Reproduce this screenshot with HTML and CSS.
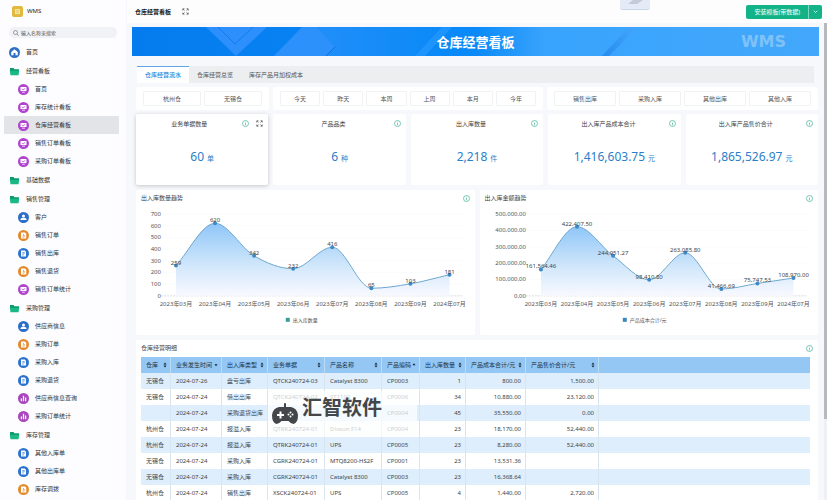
FILE: index.html
```html
<!DOCTYPE html>
<html lang="zh-CN">
<head>
<meta charset="utf-8">
<title>仓库经营看板</title>
<link rel="stylesheet" href="styles.css">
</head>
<body>
<svg class="defs" aria-hidden="true">
  <symbol id="i-home" viewBox="0 0 22 22"><circle cx="11" cy="11" r="11" fill="#2f6fc4"/><path d="M11 4.5 4.5 10v6.5H9V12h4v4.500h4.500V10z" fill="#fff"/></symbol>
  <symbol id="i-folder" viewBox="0 0 22 22"><path d="M2 4h7l2 2.500h9V10H2z" fill="#0c9a6c"/><path d="M1.500 9.500h19L19 18.500H3z" fill="#1bb886"/></symbol>
  <symbol id="i-board" viewBox="0 0 22 22"><circle cx="11" cy="11" r="11" fill="#b043cf"/><path d="M5 6h12v8H5zM8 15.500h6V17H8z" fill="#fff"/><path d="m7.500 10 2.500 2 4.500-3.500" fill="none" stroke="#b043cf" stroke-width="1.500"/></symbol>
  <symbol id="i-user" viewBox="0 0 22 22"><circle cx="11" cy="11" r="11" fill="#2c6fc9"/><circle cx="11" cy="8" r="3" fill="#fff"/><path d="M5 16v-2q1-2 4.500-2.500h3q3.500.5 4.500 2.500v2z" fill="#fff"/></symbol>
  <symbol id="i-order" viewBox="0 0 22 22"><circle cx="11" cy="11" r="11" fill="#e38a2c"/><path d="M6 5h8l2.500 2.500V17H6z" fill="#fff"/><path d="M11 8v3.500h3M9 14h4" fill="none" stroke="#e38a2c" stroke-width="1.500"/></symbol>
  <symbol id="i-doc" viewBox="0 0 22 22"><circle cx="11" cy="11" r="11" fill="#2c73cf"/><path d="M6 5h7.500L16 7.500V17H6z" fill="#fff"/><path d="M8.500 9h5M8.500 11.500h5M8.500 14h3" stroke="#2c73cf" stroke-width="1.200"/></symbol>
  <symbol id="i-bars" viewBox="0 0 22 22"><circle cx="11" cy="11" r="11" fill="#a945bd"/><path d="M5.500 11H8v5.500H5.500zM9.700 5.500h2.600v11H9.700zM14 9h2.500v7.500H14z" fill="#fff"/></symbol>
  <symbol id="i-info" viewBox="0 0 14 14"><circle cx="7" cy="7" r="6" fill="none" stroke="currentColor" stroke-width="1.300"/><path d="M7 6v4.500M7 3.500v1.300" stroke="currentColor" stroke-width="1.300"/></symbol>
  <symbol id="i-expand" viewBox="0 0 14 14"><path d="M1.500 5V1.500H5M9 1.500h3.500V5M12.500 9v3.500H9M5 12.500H1.500V9M2 2l3 3M12 2 9 5M12 12 9 9M2 12l3-3" fill="none" stroke="currentColor" stroke-width="1.300"/></symbol>
  <symbol id="i-sort" viewBox="0 0 8 12"><path d="M4 1 7 5H1zM4 11 1 7h6z" fill="currentColor"/></symbol>
  <symbol id="i-desc" viewBox="0 0 8 12"><path d="M4 8.500 1 4.500h6z" fill="currentColor"/></symbol>
  <symbol id="i-asc" viewBox="0 0 8 12"><path d="M4 2.500 7 6.500H1z" fill="currentColor"/></symbol>
</svg>

<aside class="sidebar">
  <div class="brand">
    <svg class="brand-logo" viewBox="0 0 22 22"><rect width="22" height="22" rx="4" fill="#e2b93f"/><path d="M6 6h10v10H6z" fill="#f6e3a4"/><path d="M8.500 9h5M8.500 12.500h5" stroke="#e2b93f" stroke-width="1.500"/></svg>
    <span>WMS</span>
  </div>
  <label class="search">
    <svg viewBox="0 0 12 12"><circle cx="5" cy="5" r="4" fill="none" stroke="#666" stroke-width="1.200"/><path d="m8 8 3.500 3.500" stroke="#666" stroke-width="1.200"/></svg>
    <input type="text" placeholder="输入名称来搜索" aria-label="搜索">
  </label>
  <nav class="menu">
    <a href="#"><svg><use href="#i-home"/></svg>首页</a>
    <a href="#" class="group"><svg><use href="#i-folder"/></svg>经营看板</a>
    <a href="#" class="sub"><svg><use href="#i-board"/></svg>首页</a>
    <a href="#" class="sub"><svg><use href="#i-board"/></svg>库存统计看板</a>
    <a href="#" class="sub active"><svg><use href="#i-board"/></svg>仓库经营看板</a>
    <a href="#" class="sub"><svg><use href="#i-board"/></svg>销售订单看板</a>
    <a href="#" class="sub"><svg><use href="#i-board"/></svg>采购订单看板</a>
    <a href="#" class="group"><svg><use href="#i-folder"/></svg>基础数据</a>
    <a href="#" class="group"><svg><use href="#i-folder"/></svg>销售管理</a>
    <a href="#" class="sub"><svg><use href="#i-user"/></svg>客户</a>
    <a href="#" class="sub"><svg><use href="#i-order"/></svg>销售订单</a>
    <a href="#" class="sub"><svg><use href="#i-doc"/></svg>销售出库</a>
    <a href="#" class="sub"><svg><use href="#i-order"/></svg>销售退货</a>
    <a href="#" class="sub"><svg><use href="#i-board"/></svg>销售订单统计</a>
    <a href="#" class="group"><svg><use href="#i-folder"/></svg>采购管理</a>
    <a href="#" class="sub"><svg><use href="#i-user"/></svg>供应商信息</a>
    <a href="#" class="sub"><svg><use href="#i-order"/></svg>采购订单</a>
    <a href="#" class="sub"><svg><use href="#i-doc"/></svg>采购入库</a>
    <a href="#" class="sub"><svg><use href="#i-doc"/></svg>采购退货</a>
    <a href="#" class="sub"><svg><use href="#i-bars"/></svg>供应商信息查询</a>
    <a href="#" class="sub"><svg><use href="#i-bars"/></svg>采购订单统计</a>
    <a href="#" class="group"><svg><use href="#i-folder"/></svg>库存管理</a>
    <a href="#" class="sub"><svg><use href="#i-doc"/></svg>其他入库单</a>
    <a href="#" class="sub"><svg><use href="#i-doc"/></svg>其他出库单</a>
    <a href="#" class="sub"><svg><use href="#i-order"/></svg>库存调拨</a>
  </nav>
</aside>

<main class="main">
  <header class="topbar">
    <h1>仓库经营看板</h1>
    <svg class="icon dark"><use href="#i-expand"/></svg>
    <div class="pull-tab"><svg viewBox="0 0 30 10"><path d="M13 0h10l-6 4H8z" fill="#c3cad8"/></svg></div>
    <div class="install">
      <button type="button">安装模板(带数据)</button>
      <button type="button" class="more" aria-label="更多"><svg viewBox="0 0 10 10"><path d="m1.500 3.500 3.500 3.500 3.500-3.500" fill="none" stroke="#fff" stroke-width="1.500"/></svg></button>
    </div>
  </header>

  <div class="viewport">
    <div class="content">
      <section class="banner">
        <svg class="banner-art" viewBox="0 0 687 29" preserveAspectRatio="none">
          <defs>
            <linearGradient id="band"><stop offset="0" stop-color="#2b93fa"/><stop offset="1" stop-color="#0b8af8"/></linearGradient>
            <linearGradient id="streak" x1="0" y1="1" x2="1" y2="0"><stop offset="0" stop-color="#1c80e8"/><stop offset="1" stop-color="#48a8fb"/></linearGradient>
          </defs>
          <path d="M74 0h61l-31 29z" fill="#2c8ffb"/>
          <path d="m86 0 17 17L121 0" fill="none" stroke="#1479ec"/>
          <path d="M142 29 170 0h15l18 20-9 9z" fill="#2c91fb"/>
          <path d="M185 0h125l-27 29h-89l9-9z" fill="url(#band)" opacity=".7"/>
          <path d="m194 29 9-9" stroke="#0c70dd"/>
          <path d="m283 29 27-29h10l-27 29z" fill="#2b9cff" opacity=".6"/>
          <path d="m470 29 27-29h8l-28 29z" fill="url(#streak)" opacity=".7"/>
        </svg>
        <h2>仓库经营看板</h2>
        <span class="banner-mark">WMS</span>
      </section>

      <div class="tabs" role="tablist">
        <button type="button" role="tab" aria-selected="true">仓库经营流水</button>
        <button type="button" role="tab" aria-selected="false">仓库经营总览</button>
        <button type="button" role="tab" aria-selected="false">库存产品月加权成本</button>
      </div>

      <div class="filters">
        <div class="card filter"><button type="button">杭州仓</button><button type="button">无锡仓</button></div>
        <div class="card filter"><button type="button">今天</button><button type="button">昨天</button><button type="button">本周</button><button type="button">上周</button><button type="button">本月</button><button type="button">今年</button></div>
        <div class="card filter"><button type="button">销售出库</button><button type="button">采购入库</button><button type="button">其他出库</button><button type="button">其他入库</button></div>
      </div>

      <div class="kpis">
        <section class="card kpi raised"><header><h3>业务单据数量</h3><svg class="icon"><use href="#i-info"/></svg><svg class="icon dark"><use href="#i-expand"/></svg></header><p>60<small>单</small></p></section>
        <section class="card kpi"><header><h3>产品品类</h3><svg class="icon"><use href="#i-info"/></svg></header><p>6<small>种</small></p></section>
        <section class="card kpi"><header><h3>出入库数量</h3><svg class="icon"><use href="#i-info"/></svg></header><p>2,218<small>件</small></p></section>
        <section class="card kpi"><header><h3>出入库产品成本合计</h3><svg class="icon"><use href="#i-info"/></svg></header><p>1,416,603.75<small>元</small></p></section>
        <section class="card kpi"><header><h3>出入库产品售价合计</h3><svg class="icon"><use href="#i-info"/></svg></header><p>1,865,526.97<small>元</small></p></section>
      </div>

      <div class="charts">
        <section class="card panel"><header><h3>出入库数量趋势</h3><svg class="icon"><use href="#i-info"/></svg></header><svg class="chart" id="chart-qty" viewBox="0 0 339 129"></svg></section>
        <section class="card panel"><header><h3>出入库金额趋势</h3><svg class="icon"><use href="#i-info"/></svg></header><svg class="chart" id="chart-amount" viewBox="0 0 339 129"></svg></section>
      </div>

      <section class="card panel detail">
        <header><h3>仓库经营明细</h3><svg class="icon"><use href="#i-info"/></svg></header>
        <table>
          <colgroup><col class="c-store"><col class="c-date"><col class="c-type"><col class="c-bill"><col class="c-bill"><col class="c-code"><col class="c-qty"><col class="c-cost"><col class="c-price"><col></colgroup>
          <thead><tr>
            <th><div>仓库<svg><use href="#i-sort"/></svg></div></th>
            <th><div>业务发生时间<svg><use href="#i-desc"/></svg></div></th>
            <th><div>出入库类型<svg><use href="#i-sort"/></svg></div></th>
            <th><div>业务单据<svg><use href="#i-sort"/></svg></div></th>
            <th><div>产品名称<svg><use href="#i-sort"/></svg></div></th>
            <th><div>产品编码<svg><use href="#i-asc"/></svg></div></th>
            <th><div>出入库数量<svg><use href="#i-sort"/></svg></div></th>
            <th><div>产品成本合计/元<svg><use href="#i-sort"/></svg></div></th>
            <th><div>产品售价合计/元<svg><use href="#i-sort"/></svg></div></th>
            <th></th>
          </tr></thead>
          <tbody>
            <tr><td>无锡仓</td><td>2024-07-26</td><td>盘亏出库</td><td>QTCK240724-03</td><td>Catalyst 8300</td><td>CP0003</td><td class="num">1</td><td class="num">800.00</td><td class="num">1,500.00</td><td></td></tr>
            <tr><td>无锡仓</td><td>2024-07-24</td><td>借出出库</td><td>QTCK240724-02</td><td>ST1100</td><td>CP0006</td><td class="num">34</td><td class="num">10,880.00</td><td class="num">23,120.00</td><td></td></tr>
            <tr><td></td><td>2024-07-24</td><td>采购退货出库</td><td></td><td></td><td>CP0004</td><td class="num">45</td><td class="num">35,550.00</td><td class="num">0.00</td><td></td></tr>
            <tr><td>杭州仓</td><td>2024-07-24</td><td>报溢入库</td><td>QTRK240724-01</td><td>Dixsun F14</td><td>CP0004</td><td class="num">23</td><td class="num">18,170.00</td><td class="num">52,440.00</td><td></td></tr>
            <tr><td>杭州仓</td><td>2024-07-24</td><td>报溢入库</td><td>QTRK240724-01</td><td>UPS</td><td>CP0005</td><td class="num">23</td><td class="num">8,280.00</td><td class="num">52,440.00</td><td></td></tr>
            <tr><td>无锡仓</td><td>2024-07-24</td><td>采购入库</td><td>CGRK240724-01</td><td>MTQ8200-HS2F</td><td>CP0001</td><td class="num">23</td><td class="num">13,531.36</td><td class="num"></td><td></td></tr>
            <tr><td>无锡仓</td><td>2024-07-24</td><td>采购入库</td><td>CGRK240724-01</td><td>Catalyst 8300</td><td>CP0003</td><td class="num">23</td><td class="num">16,368.64</td><td class="num"></td><td></td></tr>
            <tr><td>杭州仓</td><td>2024-07-24</td><td>销售出库</td><td>XSCK240724-01</td><td>UPS</td><td>CP0005</td><td class="num">4</td><td class="num">1,440.00</td><td class="num">2,720.00</td><td></td></tr>
          </tbody>
        </table>
        <div class="watermark">
          <svg viewBox="0 0 26 22"><path d="M12 4V1a1 1 0 0 1 2 0v3h5q6 1 7 8 0 8-4.500 9-2.500 0-5-3h-7q-2.500 3-5 3Q0 20 0 12 1 5 7 4z" fill="#43474c"/><path d="M8.500 8.500v7M5 12h7" stroke="#fff" stroke-width="2"/><circle cx="18.500" cy="9.500" r="1" fill="#fff"/><circle cx="18.500" cy="13.500" r="1" fill="#fff"/><circle cx="16.500" cy="11.500" r="1" fill="#fff"/><circle cx="20.500" cy="11.500" r="1" fill="#fff"/></svg>
          <strong>汇智软件</strong>
        </div>
      </section>
    </div>
    <div class="scrollbar"><span></span></div>
  </div>
</main>
<script src="charts.js"></script>
</body>
</html>
```
FILE: styles.css
```css
* { box-sizing: border-box; }

body {
  margin: 0;
  height: 100vh;
  display: flex;
  overflow: hidden;
  background: #fcfdfe;
  color: #444;
  font: 6px/10px "Noto Sans", "Noto Sans CJK SC", sans-serif;
}

h1, h2, h3, p { margin: 0; font-size: inherit; font-weight: 400; }
button { font: inherit; color: inherit; border: 0; padding: 0; background: none; }
.defs { position: absolute; width: 0; height: 0; }

.icon { width: 7px; height: 7px; flex: none; color: #35ac92; }
.icon.dark { color: #444; }

/* Sidebar */
.sidebar { width: 127px; flex: none; overflow: hidden; background: #fdfdff; border-right: 1px solid #f6f7fa; }
.brand { display: flex; align-items: center; gap: 4px; height: 22px; padding-left: 12px; color: #222; }
.brand-logo { width: 11px; height: 11px; }
.search { display: flex; align-items: center; gap: 2px; height: 11px; margin: 5px 9px; padding-left: 4px; border-radius: 5px; background: #f1f2f5; }
.search svg { width: 6px; height: 6px; }
.search input { flex: 1; min-width: 0; padding: 0; border: 0; background: none; font: inherit; font-size: 5px; }
.search input::placeholder { color: #555; }
.menu { display: flex; flex-direction: column; margin: 0 7px 0 4px; }
.menu a { display: flex; align-items: center; gap: 6px; height: 18px; padding-left: 5px; border-radius: 1px; color: #333; text-decoration: none; }
.menu a.group { margin-top: 1px; }
.menu a.sub { padding-left: 14px; }
.menu a.active { background: #e3e4e8; }
.menu svg { width: 11px; height: 11px; }

/* Top bar */
.main { flex: 1; min-width: 0; display: flex; flex-direction: column; }
.topbar { position: relative; display: flex; align-items: center; gap: 11px; flex: none; height: 23px; padding: 0 5px 0 8px; background: #fdfdfe; }
.topbar h1 { font-weight: 700; color: #222; }
.pull-tab { position: absolute; top: 0; right: 177px; width: 30px; height: 10px; border-radius: 0 0 3px 3px; background: #e4ebf6; border-bottom: 1px solid #c9d6ea; }
.pull-tab svg { display: block; width: 30px; height: 10px; }
.install { display: flex; height: 14px; margin-left: auto; border-radius: 2px; overflow: hidden; background: #13b388; color: #fff; }
.install button { padding: 0 8px; }
.install .more { display: flex; align-items: center; padding: 0 4px; border-left: 1px solid #7ed6be; }
.install .more svg { width: 5px; height: 5px; }

/* Scroll area */
.viewport { flex: 1; min-height: 0; display: flex; background: #f7f8fb; }
.content { flex: 1; min-width: 0; padding: 4px 6px 0 9px; overflow: hidden; }
.scrollbar { width: 3px; flex: none; background: #eef0f3; }
.scrollbar span { display: block; height: 83%; background: #b7b9bc; }

.banner { position: relative; display: flex; align-items: center; justify-content: center; height: 29px; margin: 0 -1px 10px -4px; background: linear-gradient(90deg, #057bee, #0a8af8 50%, #38a3fd 60%, #43a8fb); color: #fff; }
.banner-art { position: absolute; inset: 0; width: 100%; height: 100%; }
.banner h2 { position: relative; font-size: 13px; font-weight: 700; }
.banner-mark { position: absolute; right: 33px; color: #7fc2fa; font: 700 16px/29px "DejaVu Sans", sans-serif; }

.tabs { display: flex; height: 17px; margin: 0 4px 4px 1px; background: #eceef0; color: #555; }
.tabs button { padding: 0 8px; }
.tabs [aria-selected="true"] { background: #fff; color: #1684dc; border-top: 1px solid #5ea6e6; font-weight: 500; }

.card { background: #fff; border-radius: 2px; }

.filters { display: grid; grid-template-columns: 133fr 270fr 271fr; gap: 4px; margin-bottom: 4px; }
.filter { display: flex; gap: 3px; padding: 4px 7px; }
.filter button { flex: 1; height: 15px; border: 1px solid #f0f2f4; border-radius: 1px; color: #555; }

.kpis { display: grid; grid-template-columns: repeat(5, 1fr); gap: 5px; margin-bottom: 5px; }
.kpi { height: 71px; }
.kpi.raised { box-shadow: 0 1px 4px #0003; }
.kpi header { display: flex; align-items: center; gap: 7px; height: 19px; padding-right: 5px; }
.kpi h3 { flex: 1; text-align: center; margin-right: -7px; }
.kpi p { padding-top: 16px; text-align: center; color: #2b80c8; font-size: 12px; line-height: 16px; }
.kpi small { margin-left: 3px; font-size: 7px; }

.charts { display: grid; grid-template-columns: 1fr 1fr; gap: 5px; margin-bottom: 5px; }
.panel header { display: flex; align-items: center; justify-content: space-between; height: 16px; padding: 0 5px; }
.chart { display: block; width: 100%; }
.chart text { font-size: 6px; fill: #555; }
.chart .value { fill: #444; text-anchor: middle; }
.chart .month { text-anchor: middle; }
.chart .tick { text-anchor: end; }
.chart .legend { font-size: 5px; }
.chart .grid { stroke: #fafbfc; }
.chart .axis { stroke: #d8dbe0; stroke-dasharray: 2 1; }
.chart .line { fill: none; stroke: #6da7cc; }
.chart .dot { fill: #3d8ac6; }

/* Detail table */
.detail { position: relative; padding: 0 8px 0 5px; }
.detail header { height: 17px; padding: 0; }
.detail header .icon { margin-right: -3px; }
table { width: 100%; table-layout: fixed; border-collapse: separate; border-spacing: 0; }
.c-store { width: 30px; }
.c-date { width: 51px; }
.c-type { width: 46px; }
.c-bill { width: 57px; }
.c-code { width: 38px; }
.c-qty { width: 46px; }
.c-cost { width: 60px; }
.c-price { width: 73px; }
th, td { height: 16px; padding: 0 4px 0 5px; border-right: 1px solid #d9e5ee; text-align: left; font-weight: 400; white-space: nowrap; }
th { background: #94c7f3; border-color: #b9dbf6; color: #234; }
th div { display: flex; align-items: center; justify-content: space-between; }
th svg { width: 4px; height: 6px; flex: none; margin-right: -1px; color: #123; }
tbody tr:nth-child(odd) td { background: #deeefc; }
th:last-child, td:last-child { border-right: 0; }
.num { text-align: right; }

.watermark { position: absolute; top: 51px; left: 132px; display: flex; gap: 4px; width: 149px; height: 46px; padding: 6px 4px; background: #fcfefebb; color: #43474c; }
.watermark svg { width: 26px; height: 22px; margin-top: 6px; }
.watermark strong { font-size: 20px; line-height: 22px; }
```
FILE: charts.js
```js
const months = ["2023年03月", "2023年04月", "2023年05月", "2023年06月", "2023年07月", "2023年08月", "2023年09月", "2024年07月"];
const TOP = 8, BASE = 90;

// Cubic path through the points that never overshoots a local extreme.
function smoothPath(pts) {
  const n = pts.length;
  const slope = pts.slice(1).map((p, i) => (p[1] - pts[i][1]) / (p[0] - pts[i][0]));
  const tangent = pts.map((_, i) => {
    if (i === 0) return slope[0];
    if (i === n - 1) return slope[n - 2];
    const a = slope[i - 1], b = slope[i];
    if (a * b <= 0) return 0;
    return Math.sign(a) * Math.min(Math.abs(a), Math.abs(b), Math.abs(a + b) / 4) * 2;
  });
  let d = `M${pts[0]}`;
  for (let i = 1; i < n; i++) {
    const [x0, y0] = pts[i - 1], [x1, y1] = pts[i], h = (x1 - x0) / 3;
    d += `C${x0 + h},${y0 + tangent[i - 1] * h} ${x1 - h},${y1 - tangent[i] * h} ${x1},${y1}`;
  }
  return d;
}

function draw(id, o) {
  const step = (o.right - o.left) / (o.values.length - 1);
  const pts = o.values.map((v, i) => [o.left + step * i, BASE - v / o.max * (BASE - TOP)]);
  const path = smoothPath(pts);
  let s = `<defs><linearGradient id="${id}-fill" x1="0" y1="0" x2="0" y2="1"><stop offset="0" stop-color="#8fc6f8"/><stop offset=".6" stop-color="#d3e8fb"/><stop offset="1" stop-color="#f8f9ff"/></linearGradient></defs>`;
  for (let i = 0; i <= o.ticks; i++) {
    const y = BASE - i * (BASE - TOP) / o.ticks;
    s += `<line class="${i ? "grid" : "axis"}" x1="${o.left - 15}" x2="${o.right + 14}" y1="${y}" y2="${y}"/>`;
    s += `<text class="tick" x="${o.tickX}" y="${y + 2}">${o.format(o.max / o.ticks * i)}</text>`;
  }
  s += `<path d="${path}L${o.right},${BASE}L${o.left},${BASE}Z" fill="url(#${id}-fill)"/><path class="line" d="${path}"/>`;
  pts.forEach(([x, y], i) => {
    s += `<circle class="dot" cx="${x}" cy="${y}" r="2"/><text class="value" x="${x}" y="${y - 1}">${o.format(o.values[i])}</text>`;
    s += `<text class="month" x="${x}" y="100">${months[i]}</text>`;
  });
  s += `<rect x="${o.legendX}" y="112" width="4" height="4" fill="${o.legendColor}"/><text class="legend" x="${o.legendX + 7}" y="116">${o.legend}</text>`;
  document.getElementById(id).innerHTML = s;
}

draw("chart-qty", {
  values: [259, 620, 342, 232, 416, 65, 103, 181],
  max: 700, ticks: 7, left: 40, right: 314, tickX: 25,
  format: v => String(v), legend: "出入库数量", legendX: 150, legendColor: "#3a9c96"
});
draw("chart-amount", {
  values: [161564.46, 422407.5, 244951.27, 98410.8, 263085.8, 41466.69, 75747.53, 108970],
  max: 500000, ticks: 5, left: 61, right: 314, tickX: 46,
  format: v => v.toLocaleString("en-US", { minimumFractionDigits: 2, maximumFractionDigits: 2 }),
  legend: "产品成本合计/元", legendX: 143, legendColor: "#3a86c0"
});
```
